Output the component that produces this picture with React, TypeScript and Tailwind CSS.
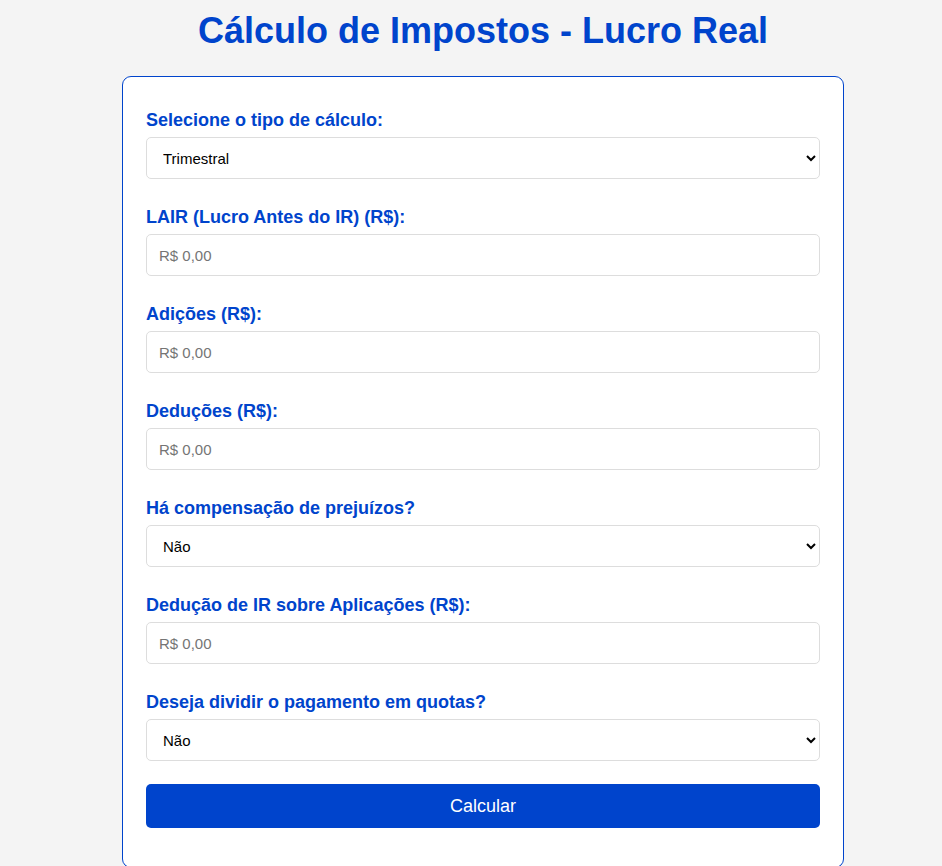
import { useState } from "react";

type Field =
    | { kind: "select"; id: string; label: string; options: string[] }
    | { kind: "input"; id: string; label: string };

const fields: Field[] = [
    { kind: "select", id: "tipo", label: "Selecione o tipo de cálculo:", options: ["Trimestral", "Anual"] },
    { kind: "input", id: "lair", label: "LAIR (Lucro Antes do IR) (R$):" },
    { kind: "input", id: "adicoes", label: "Adições (R$):" },
    { kind: "input", id: "deducoes", label: "Deduções (R$):" },
    { kind: "select", id: "compensacao", label: "Há compensação de prejuízos?", options: ["Não", "Sim"] },
    { kind: "input", id: "deducaoIr", label: "Dedução de IR sobre Aplicações (R$):" },
    { kind: "select", id: "quotas", label: "Deseja dividir o pagamento em quotas?", options: ["Não", "Sim"] },
];

export default function App() {
    const [values, setValues] = useState<Record<string, string>>({});

    const handleChange = (id: string, value: string) => {
        setValues((prev) => ({ ...prev, [id]: value }));
    };

    return (
        <div className="min-h-screen bg-[#f4f4f4] pl-[24px] pt-[10px] font-['Liberation_Sans',Arial,sans-serif]">
            <h1 className="text-center text-[36px] leading-[42px] font-bold text-[#0044cc] mb-[24px]">
                Cálculo de Impostos - Lucro Real
            </h1>

            <form
                onSubmit={(e) => e.preventDefault()}
                className="mx-auto w-[722px] bg-white border border-[#0044cc] rounded-[9px] px-[23px] pt-[33px] pb-[39px]"
            >
                <div className="flex flex-col gap-[28px]">
                    {fields.map((field) => (
                        <div key={field.id} className="flex flex-col">
                            <label
                                htmlFor={field.id}
                                className="text-[18px] leading-[21px] font-bold text-[#0044cc] mb-[6px]"
                            >
                                {field.label}
                            </label>
                            {field.kind === "select" ? (
                                <select
                                    id={field.id}
                                    value={values[field.id] ?? field.options[0]}
                                    onChange={(e) => handleChange(field.id, e.target.value)}
                                    className="h-[42px] w-full px-[12px] text-[15px] text-black bg-white border border-[#dddddd] rounded-[5px]"
                                >
                                    {field.options.map((opt) => (
                                        <option key={opt}>{opt}</option>
                                    ))}
                                </select>
                            ) : (
                                <input
                                    id={field.id}
                                    type="text"
                                    placeholder="R$ 0,00"
                                    value={values[field.id] ?? ""}
                                    onChange={(e) => handleChange(field.id, e.target.value)}
                                    className="h-[42px] w-full px-[12px] text-[15px] text-black bg-white border border-[#dddddd] rounded-[5px] placeholder:text-[#757575]"
                                />
                            )}
                        </div>
                    ))}
                </div>

                <button
                    type="submit"
                    className="mt-[23px] h-[44px] w-full bg-[#0044cc] text-white text-[18px] rounded-[5px]"
                >
                    Calcular
                </button>
            </form>
        </div>
    );
}
